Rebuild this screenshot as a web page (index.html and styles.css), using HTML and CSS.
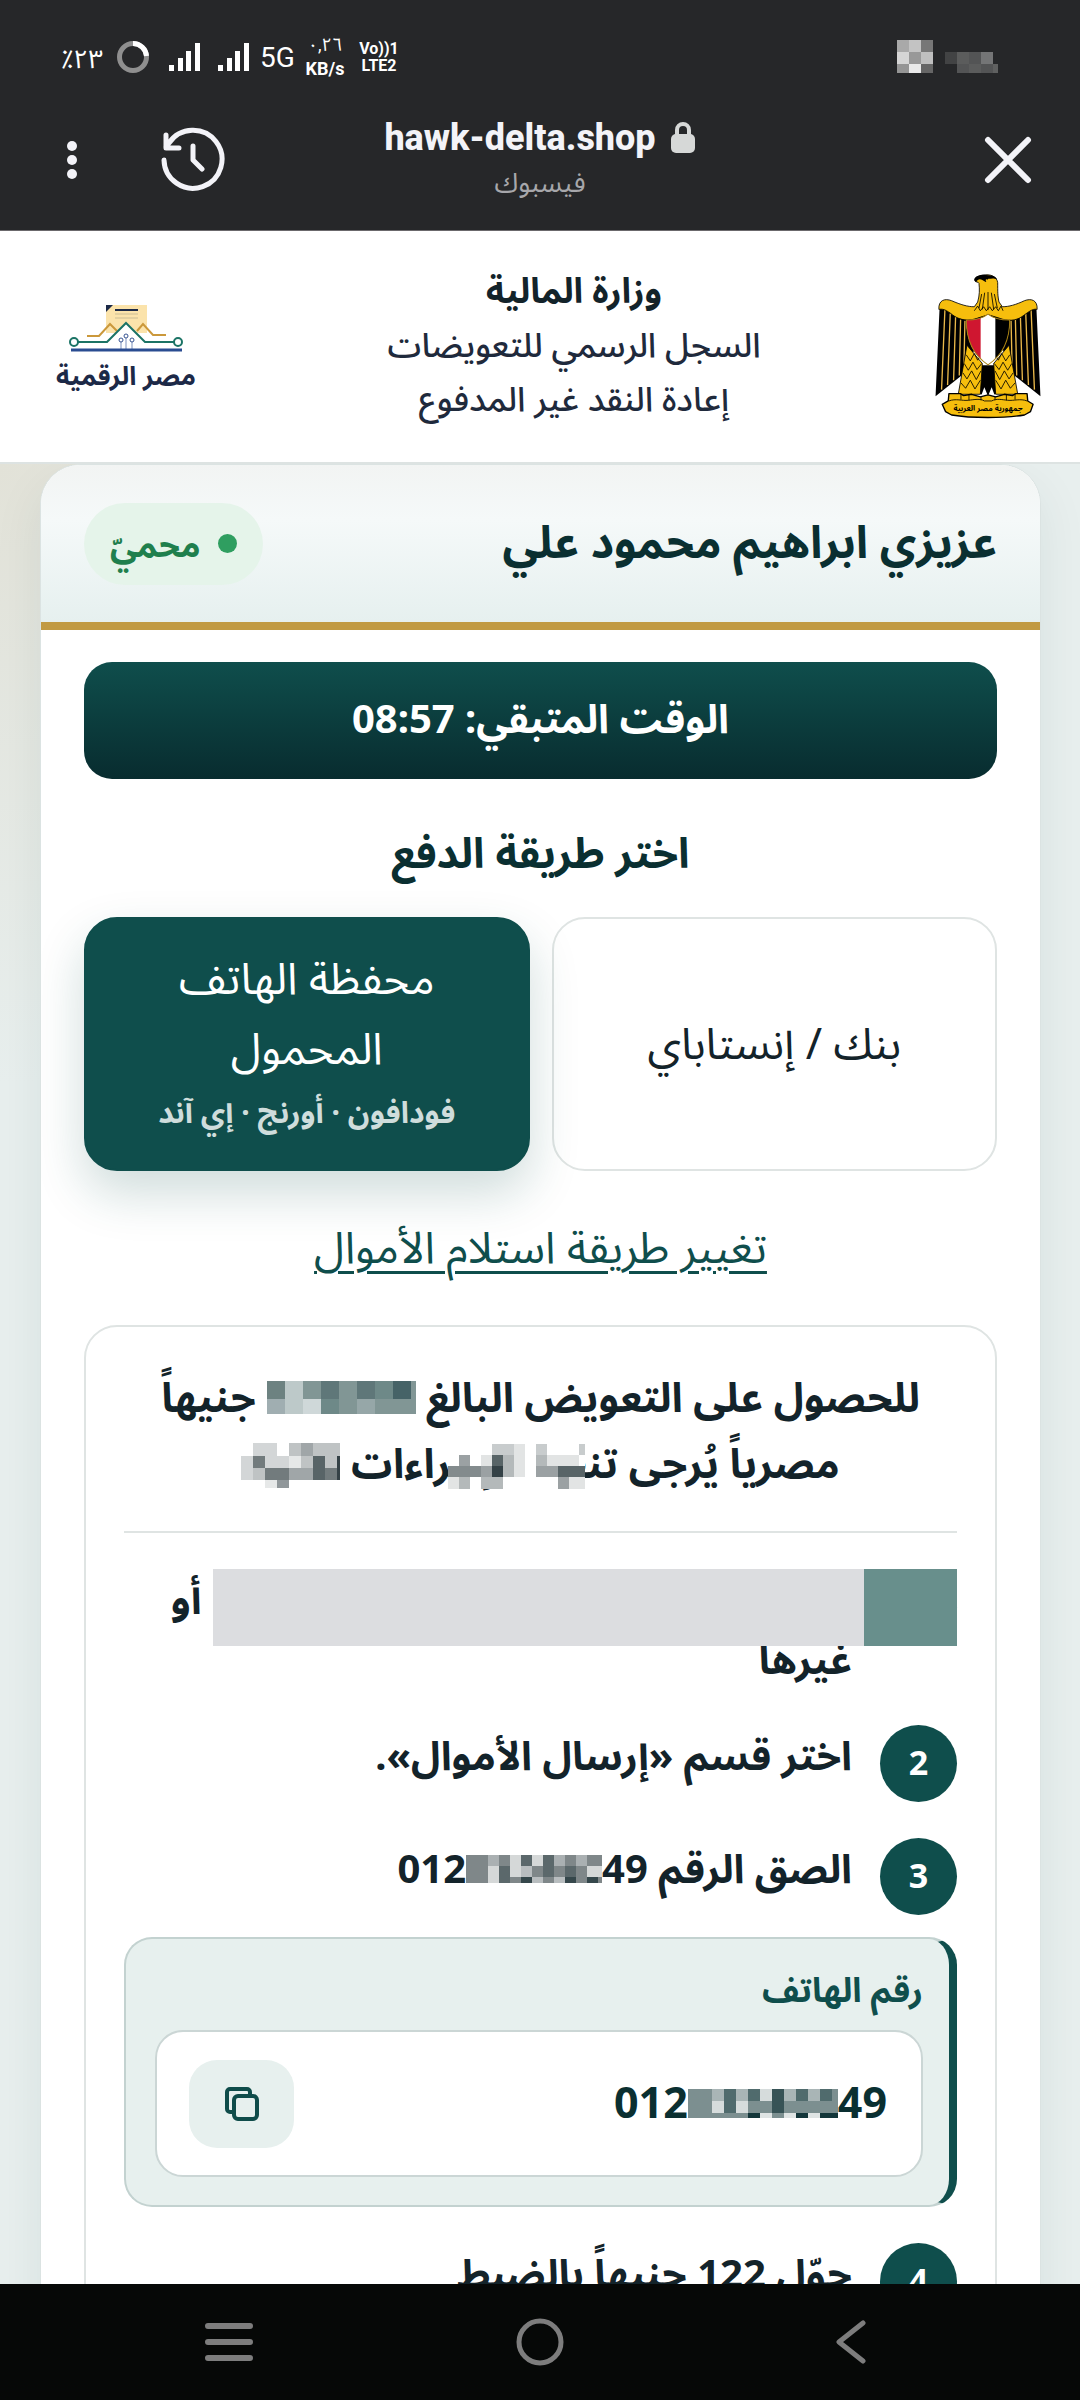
FILE: index.html
```html
<!DOCTYPE html>
<html lang="ar" dir="rtl">
<head>
    <meta charset="UTF-8">
    <meta name="viewport" content="width=device-width, initial-scale=1.0">
    <title>hawk-delta.shop</title>
    <link rel="stylesheet" href="styles.css">
</head>
<body>
    <div class="status-bar" dir="ltr">
        <div class="status-left">
            <span class="battery-text">٪٢٣</span>
            <svg class="ring" width="34" height="34" viewBox="0 0 34 34" fill="none" stroke-width="5">
                <circle cx="17" cy="17" r="13.500" stroke="#8f8f8f"/>
                <path d="M17 3.500A13.500 13.500 0 0 1 30.500 16" stroke="#fff"/>
            </svg>
            <svg class="signal" width="32" height="30" viewBox="0 0 32 30" fill="#fff"><path d="M0 23h5v6H0zM9 16h5v13H9zM17 9h5v20h-5zM26 1h5v28h-5z"/></svg>
            <svg class="signal" width="32" height="30" viewBox="0 0 32 30" fill="#fff"><path d="M0 23h5v6H0zM9 16h5v13H9zM17 9h5v20h-5zM26 1h5v28h-5z"/></svg>
            <span class="net">5G</span>
            <span class="stack speed"><span>٠,٢٦</span><b>KB/s</b></span>
            <span class="stack volte"><b>Vo))1</b><b>LTE2</b></span>
        </div>
        <svg width="102" height="34" viewBox="0 0 102 34" shape-rendering="crispEdges">
            <path fill="#a9a9a9" d="M0 0h12v12H0z"/><path fill="#c3c3c3" d="M12 0h12v12H12z"/><path fill="#777" d="M24 0h12v12H24z"/>
            <path fill="#d5d5d5" d="M0 12h12v12H0z"/><path fill="#989898" d="M12 12h12v12H12z"/><path fill="#bfbfbf" d="M24 12h12v12H24z"/>
            <path fill="#959595" d="M0 24h12v9H0z"/><path fill="#e9e9e9" d="M12 24h12v9H12z"/><path fill="#666" d="M24 24h12v9H24z"/>
            <path fill="#424344" d="M48 12h12v12H48z"/><path fill="#5b5c5c" d="M60 12h12v12H60zM72 24h12v9H72z"/><path fill="#535455" d="M72 12h12v12H72zM60 24h12v9H60zM84 24h12v9H84z"/>
            <path fill="#747576" d="M84 12h12v12H84z"/><path fill="#5f6060" d="M96 24h5v9h-5z"/>
        </svg>
    </div>

    <div class="browser-bar" dir="ltr">
        <div class="bar-side">
            <button class="icon-btn" aria-label="القائمة">
                <svg width="12" height="40" viewBox="0 0 12 40" fill="#f3f3f8"><circle cx="6" cy="6" r="5"/><circle cx="6" cy="20" r="5"/><circle cx="6" cy="34" r="5"/></svg>
            </button>
            <button class="icon-btn" aria-label="السجل">
                <svg width="66" height="66" viewBox="0 0 66 66" fill="none" stroke="#f3f3f8" stroke-width="5" stroke-linecap="round" stroke-linejoin="round">
                    <path d="M4 33a29 29 0 1 0 5-17l-3 4M6 8v13h13M33 19v14l9 9"/>
                </svg>
            </button>
        </div>
        <div class="address">
            <div class="domain">hawk-delta.shop
                <svg width="26" height="32" viewBox="0 0 26 32"><path d="M7 14V8a6 6 0 0 1 12 0v6" fill="none" stroke="#d6d8d7" stroke-width="4"/><rect x="1" y="12" width="24" height="19" rx="5" fill="#d6d8d7"/></svg>
            </div>
            <div class="source" dir="rtl">فيسبوك</div>
        </div>
        <div class="bar-side end">
            <button class="icon-btn" aria-label="إغلاق">
                <svg width="48" height="48" viewBox="0 0 48 48" fill="none" stroke="#f3f3f8" stroke-width="6" stroke-linecap="round"><path d="M4 4l40 40M44 4L4 44"/></svg>
            </button>
        </div>
    </div>

    <header class="site-header">
        <svg class="emblem" viewBox="46 42 322 434">
            <path d="M62 146L50 408L128 346L166 270H252L286 346L364 408L352 146Z" fill="#000"/>
            <g stroke="#e9b84a" stroke-width="4" fill="none">
                <path d="M78 150L68 388M94 160L86 374M110 170L104 360M125 178L121 346M138 182L135 312"/>
                <path d="M336 150L346 388M320 160L328 374M304 170L310 360M289 178L293 346M276 182L279 312"/>
            </g>
            <path d="M184 315h46l8 84-12 4-8-22-11 26-11-26-8 22-12-4z" fill="#000"/>
            <g fill="#f6be0d" stroke="#000" stroke-width="2.500" stroke-linejoin="round">
                <path d="M144 255L118 402H184L190 310Z"/>
                <path d="M270 255L296 402H230L224 310Z"/>
                <path d="M60 148C58 120 78 114 98 122C126 134 146 140 166 140L176 126C182 105 182 88 180 70C178 64 170 68 168 62C166 52 178 48 190 46C214 40 234 50 236 68C236 94 236 110 240 126L250 140C270 140 290 134 316 122C336 114 356 120 354 148C340 144 326 158 308 170C290 182 266 184 240 174L208 164L176 174C150 184 124 180 106 168C90 156 76 144 60 148Z"/>
            </g>
            <path d="M166 58c4-12 24-16 42-12 14 0 22 4 26 12-10-5-18-2-26-2l-8 10-10-6c-6-4-14-4-18 6-4 0-6-4-6-8z" fill="#000"/>
            <circle cx="203" cy="61" r="3" fill="#f6be0d"/>
            <path d="M188 102l-8 42M197 98l-7 50M207 96v54M217 98l7 50M226 102l9 42M166 152l10-14 8 14 10-12 8 12 10-12 8 12 10-12 8 12 8-14 6 14" fill="none" stroke="#000" stroke-width="2.500"/>
            <path d="M142 284l12 18 12-22 10 20 10-16M136 310l12 20 14-24 12 22 14-18M132 338l12 18 14-24 14 26 14-26M126 368l14 16 14-24 14 26 16-26M272 284l-12 18-12-22-10 20-10-16M278 310l-12 20-14-24-12 22-14-18M282 338l-12 18-14-24-14 26-14-26M288 368l-14 16-14-24-14 26-16-26" fill="none" stroke="#000" stroke-width="2.500"/>
            <path d="M142 180C168 180 190 176 207 162C224 176 246 180 272 180C272 240 250 286 207 314C164 286 142 240 142 180Z" fill="#fff"/>
            <path d="M142 180C158 180 172 178 185 174V296C156 270 142 230 142 180Z" fill="#cf1630"/>
            <path d="M272 180C256 180 242 178 229 174V296C258 270 272 230 272 180Z" fill="#000"/>
            <path d="M142 180C168 180 190 176 207 162C224 176 246 180 272 180C272 240 250 286 207 314C164 286 142 240 142 180Z" fill="none" stroke="#a88010" stroke-width="3"/>
            <path d="M90 400h34l10 6 24-4 26 8 23-6 23 6 26-8 24 4 10-6h34l2 22 16 10-8 22-18 10c-60 10-158 10-218 0l-18-10-10-22 18-10z" fill="#f6be0d" stroke="#000" stroke-width="4" stroke-linejoin="round"/>
            <path d="M90 422c20-8 40 0 58-2s36-6 48 2h22c14-8 30-4 48-2s38-6 58 2M126 402v16M150 404v16M186 408v12M228 408v12M262 404v16M288 402v16" fill="none" stroke="#000" stroke-width="2.500"/>
            <text x="207" y="451" text-anchor="middle" class="emblem-text">جمهورية مصر العربية</text>
        </svg>
        <div class="site-title">
            <strong>وزارة المالية</strong>
            <span>السجل الرسمي للتعويضات</span>
            <span>إعادة النقد غير المدفوع</span>
        </div>
        <div class="digital-logo">
            <svg width="114" height="48" viewBox="0 0 114 48" fill="none">
                <path fill="#fbe3ab" d="M37 0h41v28H37z"/>
                <path fill="#1c2947" d="M37 0h7l-7 7z"/>
                <path d="M46 5h23" stroke="#1c2947" stroke-width="2"/>
                <path d="M46 9h23M46 13h23" stroke="#cbbd95"/>
                <path d="M18 31h12l11-12 7 7M97 30H84L74 19l-6 7" stroke="#cb983b" stroke-width="2"/>
                <path d="M37 37l20-20 20 20" fill="#fff"/>
                <path d="M8 37h30l19-19 19 19h30" stroke="#1b7365" stroke-width="2"/>
                <g stroke="#1b7365" stroke-width="2" fill="#fff"><circle cx="5" cy="37" r="4"/><circle cx="109" cy="37" r="4"/></g>
                <path d="M52 45v-8M57 45V33M63 45v-8" stroke="#7c91bd"/>
                <g stroke="#355291" fill="#fff"><circle cx="52" cy="35" r="2"/><circle cx="57" cy="31" r="2"/><circle cx="63" cy="35" r="2"/></g>
                <path d="M2 45h111" stroke="#2a4c91" stroke-width="3"/>
            </svg>
            <b>مصر الرقمية</b>
        </div>
    </header>

    <main class="page">
        <section class="card">
            <div class="card-header">
                <h1>عزيزي ابراهيم محمود علي</h1>
                <span class="badge"><i class="dot"></i>محميّ</span>
            </div>
            <div class="card-body">
                <div class="timer">الوقت المتبقي: 08:57</div>
                <h2>اختر طريقة الدفع</h2>
                <div class="methods">
                    <button class="method">بنك / إنستاباي</button>
                    <button class="method active">محفظة الهاتف المحمول<small>فودافون · أورنج · إي آند</small></button>
                </div>
                <a class="change-link" href="#">تغيير طريقة استلام الأموال</a>

                <div class="steps-box">
                    <p class="intro">
                        للحصول على التعويض البالغ
                        <svg width="149" height="33" viewBox="0 0 149 33" shape-rendering="crispEdges">
                            <path fill="#819695" d="M0 0h149v33H0z"/>
                            <path fill="#6d8281" d="M0 0h18v18H0z"/><path fill="#bdc9c9" d="M18 0h18v18H18zM18 18h18v15H18z"/><path fill="#5f7779" d="M54 0h18v18H54zM90 0h18v18H90z"/>
                            <path fill="#466367" d="M126 0h18v18h-18z"/><path fill="#a0aeb1" d="M0 18h18v15H0z"/><path fill="#cfd8d9" d="M36 18h18v15H36z"/><path fill="#6e8988" d="M54 18h18v15H54zM108 0h18v18h-18z"/>
                            <path fill="#96a7a8" d="M90 18h18v15H90z"/>
                        </svg>
                        جنيهاً<br>
                        مصرياً يُرجى
                        <span class="covered">تنفيذ الإجراءات
                            <svg width="137" height="45" viewBox="0 0 137 45" shape-rendering="crispEdges">
                                <path fill="#fff" d="M0 0h137v45H0z"/>
                                <path fill="#c8cccd" d="M44 0h22v11H44zM88 0h11v11H88zM131 0h6v11h-6z"/><path fill="#e2e4e4" d="M66 0h11v11H66zM33 11h11v11H33zM66 11h11v22H66zM0 33h11v12H0zM121 33h16v12h-16zM99 11h32v11H99z"/>
                                <path fill="#9ba1a3" d="M11 11h11v11H11zM33 22h11v11H33zM88 22h44v11H88zM110 33h11v12h-11z"/><path fill="#586467" d="M44 11h11v11H44zM110 22h27v11h-27z"/>
                                <path fill="#b4b9ba" d="M55 11h11v22H55zM88 11h11v11H88zM11 33h11v12H11zM33 33h22v12H33z"/><path fill="#838b8d" d="M0 22h33v11H0z"/><path fill="#344146" d="M44 22h11v11H44z"/>
                            </svg>
                        </span>
                        <svg width="99" height="45" viewBox="0 0 99 45" shape-rendering="crispEdges">
                            <path fill="#d3d6d7" d="M12 0h24v13H12zM0 13h12v24H0zM24 13h24v12H24z"/><path fill="#bfc3c4" d="M48 0h12v13H48zM72 0h27v13H72z"/><path fill="#a0a6a8" d="M60 0h12v13H60zM48 25h24v12H48z"/>
                            <path fill="#727b7d" d="M12 13h12v12H12zM24 25h24v12H24zM84 25h12v12H84z"/><path fill="#586467" d="M72 13h12v24H72z"/><path fill="#bfc3c4" d="M12 25h12v12H12zM60 13h12v12H60zM84 13h12v12H84z"/><path fill="#344146" d="M96 13h3v24h-3z"/><path fill="#90979a" d="M36 37h12v8H36z"/><path fill="#e6e8e8" d="M24 37h12v8H24zM48 13h12v12H48z"/>
                        </svg>
                    </p>

                    <ol class="steps">
                        <li class="hidden-step">
                            <span class="num">1</span>
                            <p><span class="blank"></span> أو<br>غيرها</p>
                            <div class="redaction"></div>
                        </li>
                        <li><span class="num">2</span><p>اختر قسم «إرسال الأموال».</p></li>
                        <li>
                            <span class="num">3</span>
                            <p>الصق الرقم <bdi class="number" dir="ltr">012<svg width="136" height="28" viewBox="0 0 136 28" shape-rendering="crispEdges">
                                <path fill="#7f8789" d="M0 0h136v28H0z"/><path fill="#aab0b2" d="M22 0h11v11H22zM88 0h11v11H88zM110 0h11v11h-11z"/><path fill="#d5d8d8" d="M22 11h11v17H22zM44 0h11v22H44zM66 0h11v11H66zM121 11h15v11h-15z"/>
                                <path fill="#5b686b" d="M33 11h11v17H33zM55 0h11v11H55zM77 0h11v22H77zM99 11h11v11H99z"/><path fill="#35474b" d="M55 22h11v6H55zM99 22h11v6H99zM121 22h11v6h-11z"/><path fill="#b8bdbf" d="M55 11h11v11H55zM66 22h11v6H66zM88 22h11v6H88z"/>
                            </svg>49</bdi></p>
                        </li>
                    </ol>

                    <div class="phone-box">
                        <div class="phone-label">رقم الهاتف</div>
                        <div class="phone-field">
                            <bdi class="number large" dir="ltr">012<svg width="150" height="29" viewBox="0 0 150 29" shape-rendering="crispEdges">
                                <path fill="#7c8f90" d="M0 0h150v29H0z"/><path fill="#a9b5b6" d="M24 0h12v12H24zM48 0h12v12H48zM96 0h12v12H96zM120 0h12v12h-12z"/><path fill="#d6dcdc" d="M24 12h12v12H24zM48 12h12v12H48zM72 0h12v12H72z"/><path fill="#506b6d" d="M36 0h12v24H36zM60 0h12v12H60zM108 0h12v12h-12zM132 0h12v12h-12z"/>
                                <path fill="#375356" d="M84 0h12v24H84z"/><path fill="#13363a" d="M60 24h12v5H60zM108 24h12v5h-12zM132 24h18v5h-18z"/><path fill="#dfe4e4" d="M72 24h12v5H72zM96 24h12v5H96zM120 24h12v5h-12z"/>
                            </svg>49</bdi>
                            <button class="copy-btn" aria-label="نسخ">
                                <svg width="36" height="36" viewBox="0 0 36 36" fill="none" stroke="#0f4c4a" stroke-width="4" stroke-linejoin="round"><rect x="10" y="10" width="23" height="23" rx="4"/><path d="M10 26H6a3 3 0 0 1-3-3V6a3 3 0 0 1 3-3h17a3 3 0 0 1 3 3v4"/></svg>
                            </button>
                        </div>
                    </div>

                    <ol class="steps" start="4">
                        <li><span class="num">4</span><p>حوّل 122 جنيهاً بالضبط</p></li>
                    </ol>
                </div>
            </div>
        </section>
    </main>

    <nav class="nav-bar" dir="ltr">
        <button class="icon-btn" aria-label="التطبيقات">
            <svg width="50" height="40" viewBox="0 0 50 40" stroke="#7d7d7d" stroke-width="6" stroke-linecap="round"><path d="M4 4h42M4 20h42M4 36h42"/></svg>
        </button>
        <button class="icon-btn" aria-label="الرئيسية">
            <svg width="50" height="50" viewBox="0 0 50 50" fill="none" stroke="#7d7d7d" stroke-width="5"><circle cx="25" cy="25" r="21"/></svg>
        </button>
        <button class="icon-btn" aria-label="رجوع">
            <svg width="50" height="44" viewBox="0 0 50 44" fill="none" stroke="#7d7d7d" stroke-width="5" stroke-linecap="round" stroke-linejoin="round"><path d="M37 3L13 22l24 19"/></svg>
        </button>
    </nav>
</body>
</html>
```
FILE: styles.css
```css
* { box-sizing: border-box; }
body {
    margin: 0;
    height: 100vh;
    display: flex;
    flex-direction: column;
    overflow: hidden;
    background: #fff;
    color: #13232a;
    font-family: "Noto Sans", "Noto Sans Arabic", "DejaVu Sans", sans-serif;
}
button { font: inherit; color: inherit; cursor: pointer; }
h1, h2, p, ol { margin: 0; padding: 0; }
svg { flex: none; }

/* phone chrome */
.status-bar {
    flex: none;
    display: flex;
    align-items: center;
    justify-content: space-between;
    height: 100px;
    padding: 14px 81px 0 61px;
    background: #262729;
    color: #fff;
    font-family: Roboto, "Noto Sans Arabic", sans-serif;
}
.status-left { display: flex; align-items: center; }
.battery-text { width: 55px; font-size: 26px; line-height: 30px; padding-top: 4px; direction: ltr; unicode-bidi: bidi-override; }
.ring { margin-right: 19px; }
.signal { margin-right: 17px; }
.net { width: 45px; margin-left: -7px; font-size: 28px; }
.stack { display: flex; flex-direction: column; align-items: center; width: 40px; }
.speed { font-size: 18px; line-height: 24px; }
.volte { margin-left: 14px; font-size: 16px; line-height: 17px; }
.browser-bar {
    flex: none;
    display: flex;
    align-items: center;
    height: 131px;
    padding: 0 46px 10px;
    border-bottom: 1px solid #6b696c;
    background: #262729;
    color: #f3f3f8;
}
.bar-side { flex: 1; display: flex; align-items: center; gap: 62px; }
.bar-side .icon-btn:first-child { min-width: 52px; }
.end { justify-content: flex-end; }
.icon-btn { display: grid; place-items: center; padding: 0; border: none; background: none; }
.address { text-align: center; font-family: Roboto, "Noto Sans Arabic", sans-serif; }
.domain { display: flex; align-items: center; gap: 14px; font-size: 36px; font-weight: 800; line-height: 46px; }
.source { color: #a7a7ab; font-size: 27px; line-height: 44px; }
.nav-bar {
    flex: none;
    display: flex;
    align-items: center;
    justify-content: space-around;
    height: 116px;
    padding: 0 74px;
    background: #060807;
}

/* site header */
.site-header {
    flex: none;
    display: flex;
    align-items: center;
    justify-content: space-between;
    height: 233px;
    padding: 0 38px;
    background: #fff;
    border-bottom: 2px solid #dde3e2;
}
.emblem { width: 108px; height: 145px; }
.emblem-text { font-size: 23px; font-weight: 700; }
.site-title { display: flex; flex-direction: column; padding-bottom: 6px; text-align: center; font-size: 34px; font-weight: 500; line-height: 54px; color: #1f2a3c; }
.site-title strong { color: #13232a; font-size: 35px; font-weight: 700; }
.digital-logo { display: flex; flex-direction: column; align-items: center; width: 176px; padding-top: 8px; color: #1c2947; font-size: 26px; line-height: 44px; }

/* content card */
.page {
    flex: 1;
    min-height: 0;
    overflow: hidden;
    padding: 0 39px 0 40px;
    background: radial-gradient(circle at 0 0, #e2e2d8, #e8efee 620px);
}
.card {
    height: 2000px;
    border: 1px solid #dbe3e2;
    border-radius: 40px;
    overflow: hidden;
    background: #fff;
    box-shadow: 0 20px 50px rgba(15, 60, 60, 0.08);
}
.card-header {
    display: flex;
    align-items: center;
    justify-content: space-between;
    height: 165px;
    padding: 0 43px;
    border-bottom: 8px solid #c19a43;
    background: linear-gradient(#f2f4f3, #f5f9f9 35%, #e6f0ef);
}
.card h1 { padding-bottom: 6px; color: #0a2f31; font-size: 45px; line-height: 70px; }
.badge { display: flex; align-items: center; gap: 18px; height: 82px; padding: 0 26px; border-radius: 41px; background: #e5f4ea; color: #1f7f4d; font-size: 34px; font-weight: 700; line-height: 74px; }
.dot { width: 19px; height: 19px; border-radius: 50%; background: #2f9e60; }
.card-body { padding: 32px 43px; text-align: center; }
.timer { height: 117px; border-radius: 28px; background: linear-gradient(#0f4e4c, #082c2f); color: #fff; font-size: 40px; font-weight: 700; line-height: 112px; }
.card h2 { margin: 38px 0 30px; color: #0a2f31; font-size: 42px; line-height: 70px; }
.methods { display: grid; grid-template-columns: 1fr 1fr; gap: 22px; }
.method { height: 254px; padding: 0 50px 4px; border: 2px solid #dfe4e3; border-radius: 33px; background: #fff; color: #13232a; font-size: 44px; line-height: 70px; }
.method.active { border-color: #0f4e4c; background: #0f4e4c; color: #fff; box-shadow: 0 22px 50px rgba(15, 78, 76, 0.2); }
.method small { display: block; color: #cfdddc; font-size: 30px; font-weight: 700; line-height: 60px; white-space: nowrap; }
.change-link { display: block; margin: 40px 0 44px; color: #0f4e4c; font-size: 44px; line-height: 70px; text-decoration-thickness: 3px; text-underline-offset: 8px; }

/* steps */
.steps-box { padding: 36px 38px; border: 2px solid #dfe4e3; border-radius: 33px; }
.intro { padding-bottom: 36px; border-bottom: 2px solid #dfe4e3; font-size: 41px; font-weight: 700; line-height: 66px; white-space: nowrap; }
.intro svg { vertical-align: -2px; }
.intro svg[height="45"] { vertical-align: -10px; }
.covered { position: relative; }
.covered svg { position: absolute; left: 108px; top: 10px; }
.steps { display: flex; flex-direction: column; gap: 36px; margin-top: 36px; list-style: none; text-align: right; }
.steps li { position: relative; display: flex; align-items: flex-start; gap: 28px; font-size: 40px; font-weight: 700; line-height: 60px; }
.num { display: grid; place-items: center; flex: none; width: 77px; height: 77px; padding-bottom: 4px; border-radius: 50%; background: #0f4e4c; color: #fff; font-size: 34px; }
.blank { display: inline-block; width: 640px; }
.hidden-step p { white-space: nowrap; }
.redaction { position: absolute; top: 0; right: 0; width: 744px; height: 77px; background: linear-gradient(to left, #688f8c 93px, #dcdde0 93px); }
.number { white-space: nowrap; }
.number svg { vertical-align: 0; }
.large { color: #0a2f31; font-size: 43px; font-weight: 700; line-height: 66px; padding-bottom: 4px; }
.phone-box { margin-top: 22px; padding: 20px 26px 28px 29px; border: 2px solid #c3d2d0; border-right: 8px solid #0f4e4c; border-radius: 28px; background: #e7f0ee; }
.phone-label { color: #0f4e4c; font-size: 34px; font-weight: 700; line-height: 60px; text-align: right; margin-bottom: 11px; }
.phone-field { display: flex; align-items: center; justify-content: space-between; height: 147px; padding: 0 34px 0 32px; border: 2px solid #cbd6d5; border-radius: 28px; background: #fff; }
.copy-btn { display: grid; place-items: center; width: 105px; height: 88px; border: none; border-radius: 28px; background: #e7f0ee; }
```
